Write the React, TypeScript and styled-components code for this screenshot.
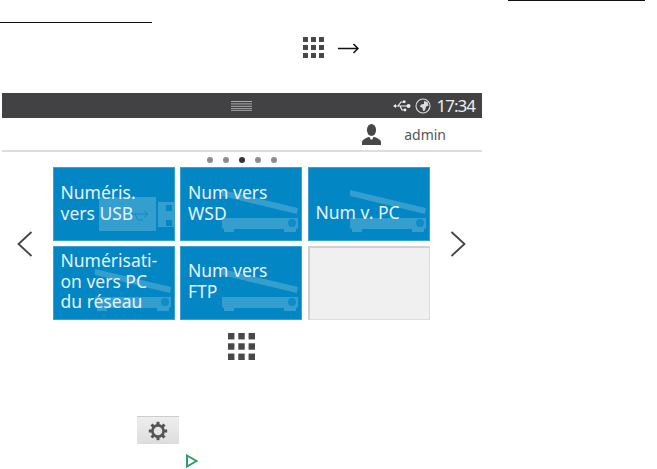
import styled, { createGlobalStyle } from "styled-components";

const GlobalStyle = createGlobalStyle`
  html, body {
    margin: 0;
    padding: 0;
    background: #fff;
    font-family: "Noto Sans", "Open Sans", sans-serif;
  }
`;

const Page = styled.div`
  width: 657px;
  height: 469px;
  overflow: hidden;
`;

const TopRule = styled.div`
  width: 137px;
  height: 1px;
  margin-left: 508px;
  background: #111;
`;

const SectionRule = styled.div`
  width: 152px;
  height: 1px;
  margin-top: 21px;
  background: #111;
`;

const IconLine = styled.div`
  display: flex;
  align-items: center;
  gap: 14px;
  margin-top: 14px;
  padding-left: 303px;
`;

const Panel = styled.div`
  width: 480px;
  margin: 35px 0 0 2px;
`;

const StatusBar = styled.div`
  height: 25px;
  padding: 0 7px 0 229px;
  display: flex;
  align-items: center;
  justify-content: space-between;
  background: #424244;
  color: #eee;
`;

const StatusIcons = styled.div`
  display: flex;
  align-items: center;
  gap: 4px;
`;

const Clock = styled.span`
  margin-left: 2px;
  font-size: 17px;
  line-height: 25px;
  letter-spacing: -1px;
`;

const UserRow = styled.div`
  height: 32px;
  padding-right: 36px;
  display: flex;
  align-items: center;
  justify-content: flex-end;
  gap: 23px;
  border-bottom: 2px solid #ddd;
`;

const UserName = styled.span`
  font-size: 14px;
  color: #555;
`;

const Dots = styled.div`
  height: 15px;
  display: flex;
  align-items: center;
  justify-content: center;
  gap: 10px;
`;

const Dot = styled.span<{ $active?: boolean }>`
  width: 6px;
  height: 6px;
  border-radius: 50%;
  background: ${(props) => (props.$active ? "#333" : "#8c8c8c")};
`;

const Carousel = styled.div`
  display: flex;
  align-items: center;
  justify-content: center;
  gap: 20px;
  padding-right: 2px;
`;

const TileGrid = styled.div`
  display: grid;
  grid-template-columns: repeat(3, 122px);
  grid-template-rows: 74px 74px;
  column-gap: 5.5px;
  row-gap: 5px;
`;

const Tile = styled.div<{ $top: number }>`
  position: relative;
  box-sizing: border-box;
  padding: ${(props) => props.$top}px 0 0 7px;
  overflow: hidden;
  background: #0286c4;
  border: 1px solid #3aa0d6;
  color: #e6f3fa;
  font-size: 17.5px;
  line-height: 20.5px;
`;

const TileLabel = styled.div`
  position: relative;
`;

const TileArt = styled.svg`
  position: absolute;
  left: -1px;
  top: -1px;
`;

const EmptyTile = styled.div`
  background: #f0f0f0;
  border: 2px solid #d0d0d0;
  border-right: 1px solid #ddd;
  border-bottom: 1px solid #ddd;
`;

const BottomIcon = styled.div`
  margin-top: 13px;
  padding-left: 228px;
  height: 27px;
`;

const SettingsButton = styled.div`
  width: 42px;
  height: 28px;
  margin: 56px 0 0 137px;
  display: flex;
  align-items: center;
  justify-content: center;
  box-sizing: border-box;
  border-top: 1px solid #ccc;
  background: linear-gradient(#eee, #ddd);
`;

const PlayLine = styled.div`
  margin-top: 10px;
  padding-left: 186px;
`;

const Block = styled.svg`
  display: block;
`;

function AppsIcon({ size }: { size: number }) {
  const cells = [0, 1, 2];
  return (
    <Block width={size} height={size} viewBox="0 0 21 21">
      {cells.map((row) =>
        cells.map((col) => (
          <rect key={`${row}-${col}`} x={col * 8} y={row * 8} width="5" height="5" fill="#484848" />
        ))
      )}
    </Block>
  );
}

function ScannerArt() {
  return (
    <TileArt width="122" height="74" viewBox="0 0 122 74">
      <g fill="#fff" fillOpacity="0.2">
        <path d="M42 23 L118 41 L117 47 L42 29 Z" />
        <path d="M42 51 H118 V60 Q118 62 116 62 V65 H104 V62 H54 V65 H44 V62 Q42 62 42 60 Z" />
      </g>
      <circle cx="112" cy="56" r="4" fill="#0286c4" fillOpacity="0.75" />
    </TileArt>
  );
}

function UsbArt() {
  return (
    <TileArt width="122" height="74" viewBox="0 0 122 74">
      <g fill="#fff" fillOpacity="0.2">
        <rect x="46" y="30" width="57" height="34" />
        <path d="M105 35 H122 V60 H105 Z M113 38 V44 H119 V38 Z M113 53 V59 H119 V53 Z" fillRule="evenodd" />
      </g>
      <path d="M75 47 H95 M91 44 L95 47 L91 50 M82 47 L85 53 H90" fill="none" stroke="#0286c4" strokeOpacity="0.7" />
    </TileArt>
  );
}

function UsbGlyph() {
  return (
    <Block width="18" height="14" viewBox="0 0 18 14">
      <g fill="none" stroke="#eee" strokeWidth="1.2">
        <path d="M2 7 H15 M5 7 L8 3 H10 M7 7 L9 11 H11" />
      </g>
      <path d="M0 7 L3 5 V9 Z" fill="#eee" />
      <circle cx="15.5" cy="7" r="2" fill="#eee" />
      <rect x="10" y="1.5" width="2.5" height="2.5" fill="#eee" />
      <circle cx="12" cy="11" r="1.4" fill="#eee" />
    </Block>
  );
}

function GlobeGlyph() {
  return (
    <Block width="16" height="16" viewBox="0 0 16 16">
      <circle cx="8" cy="8" r="7" fill="none" stroke="#ddd" strokeWidth="1.1" />
      <path d="M9 3 L12.5 4 L13.5 7.5 L11 8.5 L10 12.5 L8 13 L7.5 10 L5 8.5 L6 6.5 L9 6 Z" fill="#ddd" />
    </Block>
  );
}

function UserGlyph() {
  return (
    <Block width="19" height="21" viewBox="0 0 19 21">
      <ellipse cx="9.5" cy="6" rx="4.6" ry="6" fill="#484848" />
      <path d="M0 21 V17.5 Q1 15 6.5 13 H12.5 Q18 15 19 17.5 V21 Z" fill="#484848" />
      <path d="M7.5 13 L9.5 17 L11.5 13 Z" fill="#fff" />
      <path d="M9 15.5 H10 L10.6 21 H8.4 Z" fill="#484848" />
    </Block>
  );
}

function GearGlyph() {
  const teeth = [0, 45, 90, 135, 180, 225, 270, 315];
  return (
    <Block width="20" height="20" viewBox="0 0 20 20">
      {teeth.map((angle) => (
        <rect key={angle} x="8.5" y="0.8" width="3" height="4" fill="#555" transform={`rotate(${angle} 10 10)`} />
      ))}
      <circle cx="10" cy="10" r="5.6" fill="none" stroke="#555" strokeWidth="2.6" />
    </Block>
  );
}

function Chevron({ flip }: { flip?: boolean }) {
  return (
    <Block width="16" height="26" viewBox="0 0 16 26">
      <path
        d={flip ? "M1.5 1 L14.5 13 L1.5 25" : "M14.5 1 L1.5 13 L14.5 25"}
        fill="none"
        stroke="#444"
        strokeWidth="1.8"
      />
    </Block>
  );
}

function App() {
  return (
    <Page>
      <GlobalStyle />
      <TopRule />
      <SectionRule />
      <IconLine>
        <AppsIcon size={21} />
        <Block width="21" height="14" viewBox="0 0 21 14">
          <path d="M0 7.5 H20 M15.5 3 L20 7.5 L15.5 12" fill="none" stroke="#111" strokeWidth="1.5" />
        </Block>
      </IconLine>
      <Panel>
        <StatusBar>
          <Block width="21" height="10" viewBox="0 0 21 10">
            <path d="M0 .5 H21 M0 2.9 H21 M0 5.3 H21 M0 7.7 H21 M0 9.7 H21" stroke="#aaa" strokeWidth="1" />
          </Block>
          <StatusIcons>
            <UsbGlyph />
            <GlobeGlyph />
            <Clock>17:34</Clock>
          </StatusIcons>
        </StatusBar>
        <UserRow>
          <UserGlyph />
          <UserName>admin</UserName>
        </UserRow>
        <Dots>
          <Dot />
          <Dot />
          <Dot $active />
          <Dot />
          <Dot />
        </Dots>
        <Carousel>
          <Chevron />
          <TileGrid>
            <Tile $top={14}>
              <UsbArt />
              <TileLabel>
                Numéris.
                <br />
                vers USB
              </TileLabel>
            </Tile>
            <Tile $top={14}>
              <ScannerArt />
              <TileLabel>
                Num vers
                <br />
                WSD
              </TileLabel>
            </Tile>
            <Tile $top={34}>
              <ScannerArt />
              <TileLabel>Num v. PC</TileLabel>
            </Tile>
            <Tile $top={3}>
              <ScannerArt />
              <TileLabel>
                Numérisati-
                <br />
                on vers PC
                <br />
                du réseau
              </TileLabel>
            </Tile>
            <Tile $top={13}>
              <ScannerArt />
              <TileLabel>
                Num vers
                <br />
                FTP
              </TileLabel>
            </Tile>
            <EmptyTile />
          </TileGrid>
          <Chevron flip />
        </Carousel>
      </Panel>
      <BottomIcon>
        <AppsIcon size={27} />
      </BottomIcon>
      <SettingsButton>
        <GearGlyph />
      </SettingsButton>
      <PlayLine>
        <Block width="12" height="14" viewBox="0 0 12 14">
          <path d="M1 1.5 L10.5 7 L1 12.5 Z" fill="none" stroke="#2e9e6b" strokeWidth="2" />
        </Block>
      </PlayLine>
    </Page>
  );
}

export default App;
